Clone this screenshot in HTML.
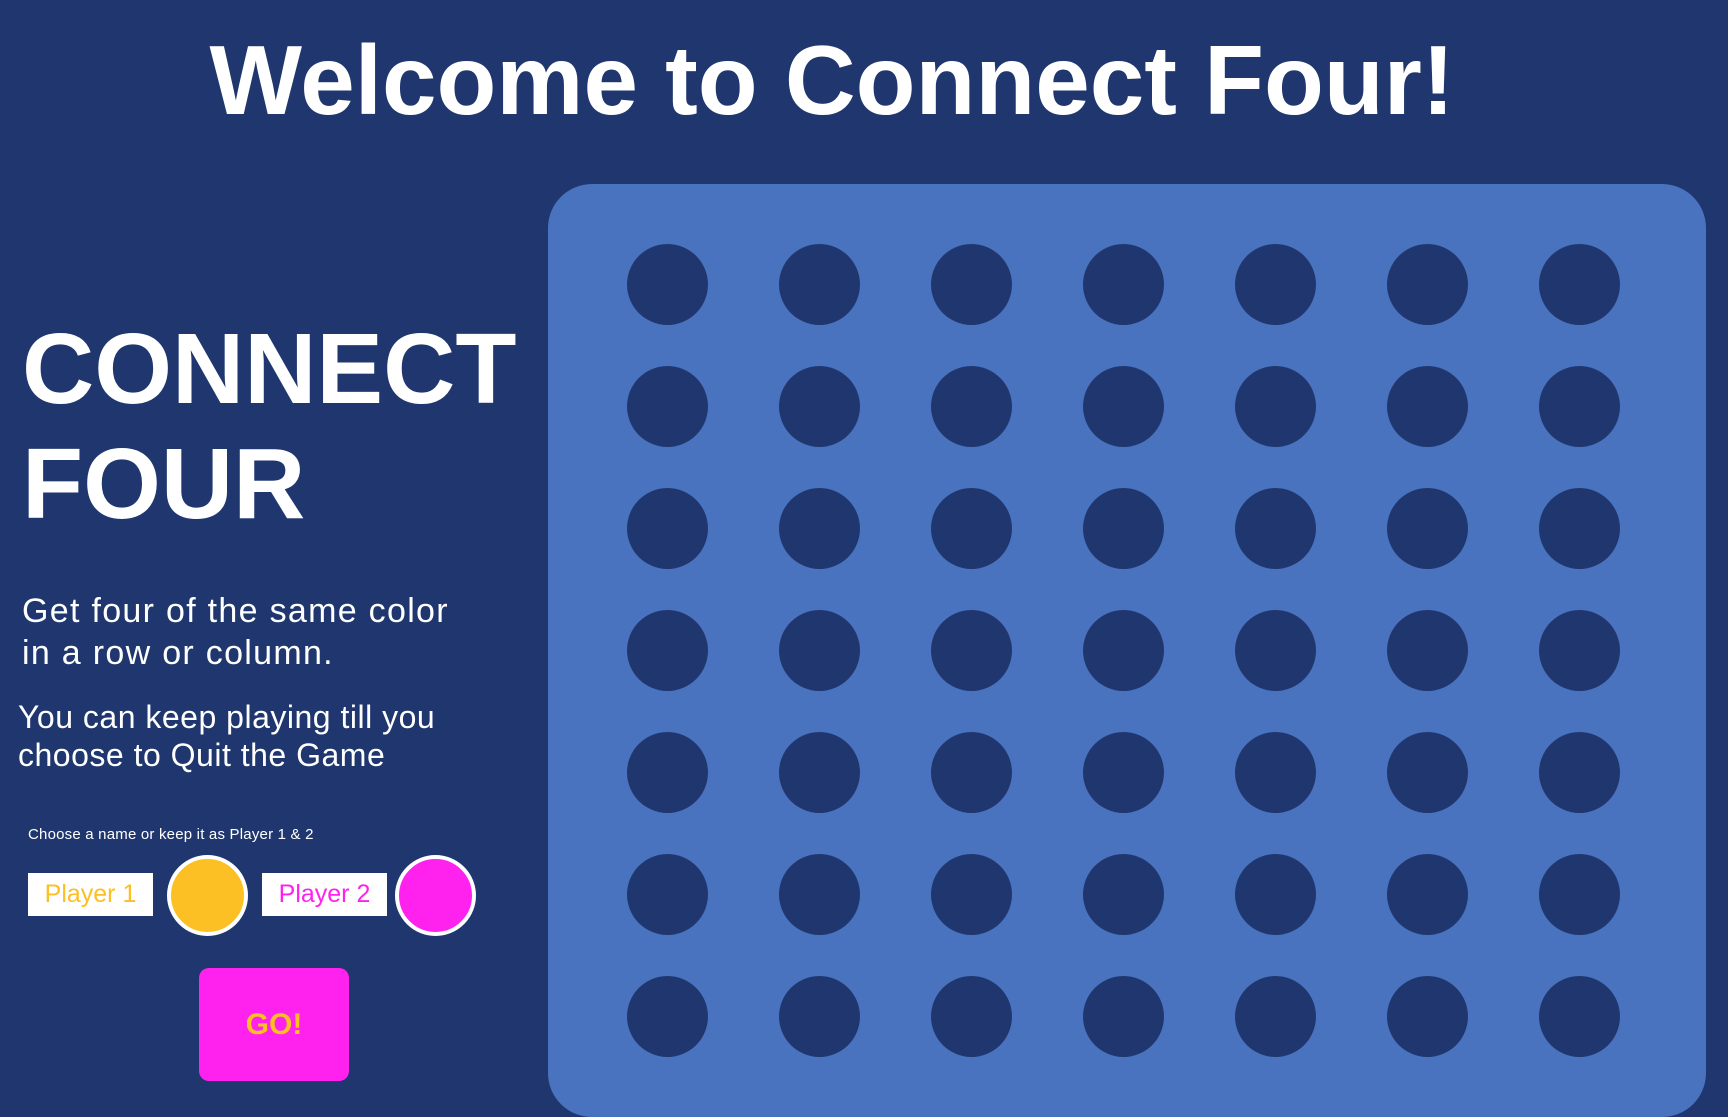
<!DOCTYPE html>
<html style="overflow:hidden;height:1117px"><head><meta charset="utf-8"><style>
*{margin:0;padding:0;box-sizing:border-box}
body{width:1728px;height:1117px;overflow:hidden;background:#1f376e;font-family:"Liberation Sans",sans-serif;color:#fff;position:relative}
.abs{position:absolute;white-space:nowrap}
h1{position:absolute;left:0;width:1664px;text-align:center;top:24px;font-size:98px;font-weight:bold}
.big{font-size:100px;font-weight:bold;left:22px}
.board{position:absolute;left:548px;top:184px;width:1158px;height:933px;background:#4a73bf;border-radius:44px}
.hole{position:absolute;width:81px;height:81px;border-radius:50%;background:#1f376e}
.inp{position:absolute;top:873px;width:125px;height:43px;background:#fff;font-size:25px;line-height:43px;text-align:center}
.chip{position:absolute;top:855px;width:81px;height:81px;border-radius:50%;border:4px solid #fff}
</style></head><body>
<h1>Welcome to Connect Four!</h1>
<div class="abs big" style="top:312px">CONNECT</div>
<div class="abs big" style="top:427px">FOUR</div>
<div class="abs" style="left:22px;top:590px;font-size:34px;line-height:42px;letter-spacing:1.3px">Get four of the same color<br>in a row or column.</div>
<div class="abs" style="left:18px;top:698px;font-size:32px;line-height:38px;letter-spacing:0.5px">You can keep playing till you<br>choose to Quit the Game</div>
<div class="abs" style="left:28px;top:826px;font-size:15px;letter-spacing:0.2px">Choose a name or keep it as Player 1 &amp; 2</div>
<div class="inp" style="left:28px;color:#fcbf24">Player 1</div>
<div class="chip" style="left:167px;background:#fcbf24"></div>
<div class="inp" style="left:262px;color:#ff22ee">Player 2</div>
<div class="chip" style="left:395px;background:#ff22ee"></div>
<div class="abs" style="left:199px;top:968px;width:150px;height:113px;background:#ff22ee;border-radius:10px;color:#fcbf24;font-weight:bold;font-size:30px;line-height:113px;text-align:center">GO!</div>
<div class="board"></div>
<div id="holes"></div>
<script>
var h='';for(var r=0;r<7;r++)for(var c=0;c<7;c++){h+='<div class="hole" style="left:'+(667-40+c*152)+'px;top:'+(284-40+r*122)+'px"></div>';}
document.getElementById('holes').innerHTML=h;
</script>
</body></html>
